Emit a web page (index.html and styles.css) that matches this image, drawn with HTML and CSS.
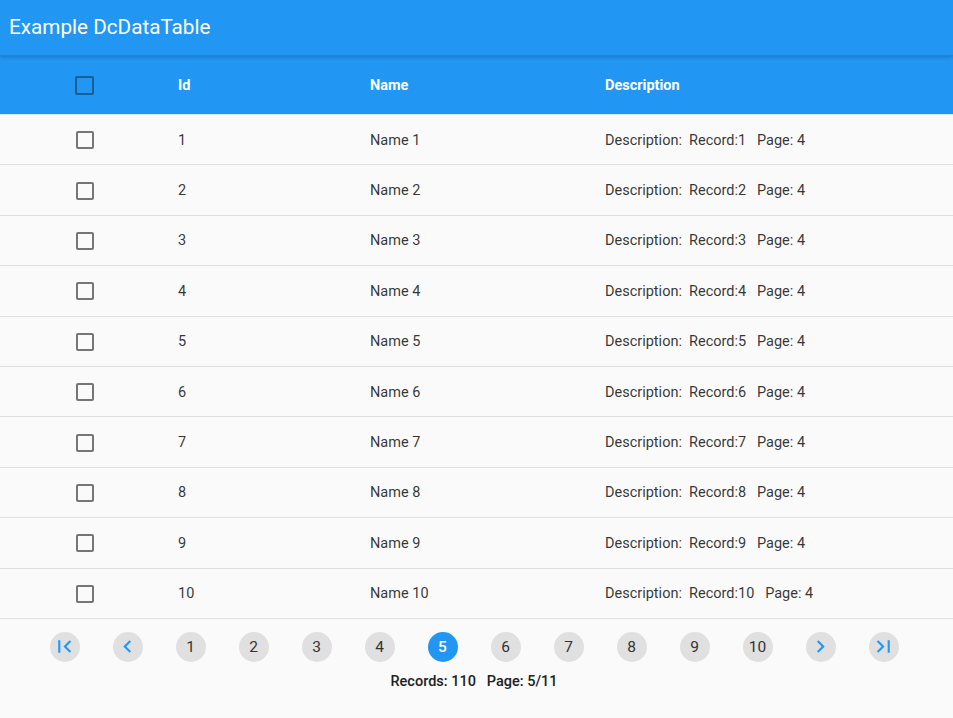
FILE: index.html
```html
<!DOCTYPE html>
<html>
<head>
<meta charset="utf-8">
<link rel="stylesheet" href="styles.css">
</head>
<body>
<header class="appbar"><span class="title">Example DcDataTable</span></header>
<div class="table">
  <div class="row head">
    <div class="cell chk"><span class="box box-head"></span></div>
    <div class="cell">Id</div>
    <div class="cell">Name</div>
    <div class="cell">Description</div>
  </div>
  <div class="row"><div class="cell chk"><span class="box"></span></div><div class="cell">1</div><div class="cell">Name 1</div><div class="cell desc">Description:  Record:1   Page: 4</div></div>
  <div class="row"><div class="cell chk"><span class="box"></span></div><div class="cell">2</div><div class="cell">Name 2</div><div class="cell desc">Description:  Record:2   Page: 4</div></div>
  <div class="row"><div class="cell chk"><span class="box"></span></div><div class="cell">3</div><div class="cell">Name 3</div><div class="cell desc">Description:  Record:3   Page: 4</div></div>
  <div class="row"><div class="cell chk"><span class="box"></span></div><div class="cell">4</div><div class="cell">Name 4</div><div class="cell desc">Description:  Record:4   Page: 4</div></div>
  <div class="row"><div class="cell chk"><span class="box"></span></div><div class="cell">5</div><div class="cell">Name 5</div><div class="cell desc">Description:  Record:5   Page: 4</div></div>
  <div class="row"><div class="cell chk"><span class="box"></span></div><div class="cell">6</div><div class="cell">Name 6</div><div class="cell desc">Description:  Record:6   Page: 4</div></div>
  <div class="row"><div class="cell chk"><span class="box"></span></div><div class="cell">7</div><div class="cell">Name 7</div><div class="cell desc">Description:  Record:7   Page: 4</div></div>
  <div class="row"><div class="cell chk"><span class="box"></span></div><div class="cell">8</div><div class="cell">Name 8</div><div class="cell desc">Description:  Record:8   Page: 4</div></div>
  <div class="row"><div class="cell chk"><span class="box"></span></div><div class="cell">9</div><div class="cell">Name 9</div><div class="cell desc">Description:  Record:9   Page: 4</div></div>
  <div class="row"><div class="cell chk"><span class="box"></span></div><div class="cell">10</div><div class="cell">Name 10</div><div class="cell desc">Description:  Record:10   Page: 4</div></div>
</div>
<nav class="pager">
  <span class="pg icon"><svg viewBox="0 0 24 24"><path d="M18.41 16.59L13.820 12l4.59-4.59L17 6l-6 6 6 6zM6 6h2v12H6z"/></svg></span>
  <span class="pg icon"><svg viewBox="0 0 24 24"><path d="M15.41 7.41L14 6l-6 6 6 6 1.41-1.41L10.83 12z"/></svg></span>
  <span class="pg">1</span>
  <span class="pg">2</span>
  <span class="pg">3</span>
  <span class="pg">4</span>
  <span class="pg active">5</span>
  <span class="pg">6</span>
  <span class="pg">7</span>
  <span class="pg">8</span>
  <span class="pg">9</span>
  <span class="pg">10</span>
  <span class="pg icon"><svg viewBox="0 0 24 24"><path d="M10 6L8.59 7.41 13.17 12l-4.58 4.59L10 18l6-6z"/></svg></span>
  <span class="pg icon"><svg viewBox="0 0 24 24"><path d="M5.59 7.41L10.18 12l-4.59 4.59L7 18l6-6-6-6zM16 6h2v12h-2z"/></svg></span>
</nav>
<div class="summary">Records: 110   Page: 5/11</div>
</body>
</html>
```

FILE: styles.css
```css
html, body {
  margin: 0;
  padding: 0;
  background: #fafafa;
  font-family: Roboto, "Liberation Sans", sans-serif;
  color: rgba(0, 0, 0, 0.8);
}

.appbar {
  height: 55px;
  background: #2196f3;
  display: flex;
  align-items: center;
  padding-left: 9px;
  position: relative;
  z-index: 2;
  box-shadow: 0 1px 0 #1e86d8, 0 2px 4px rgba(0, 0, 0, 0.22);
}

.title {
  color: #ffffff;
  font-size: 20.7px;
  font-weight: 400;
  padding-bottom: 1px;
}

.table {
  margin-top: 1px;
}

.row {
  display: grid;
  grid-template-columns: 178px 192px 235px 1fr;
  align-items: center;
  height: 48.4px;
  padding-top: 1px;
  border-bottom: 1px solid #e0e0e0;
  font-size: 14.5px;
}

.row.head {
  height: 57px;
  padding-top: 1px;
  background: #2196f3;
  color: #ffffff;
  font-weight: 700;
  border-bottom: 1px solid #d6e9f8;
}

.cell {
  white-space: pre;
}

.chk {
  display: flex;
  align-items: center;
  padding-left: 76px;
}

.box {
  width: 14px;
  height: 14px;
  border: 2px solid #757575;
  border-radius: 2px;
}

.box-head {
  border-color: #175f98;
  width: 15px;
  height: 15px;
  margin-left: -1px;
}

.pager {
  display: flex;
  justify-content: center;
  gap: 33px;
  margin-top: 13px;
  padding-right: 5px;
}

.pg {
  width: 30px;
  height: 30px;
  border-radius: 50%;
  background: #e0e0e0;
  display: flex;
  align-items: center;
  justify-content: center;
  font-size: 15.5px;
  color: #333333;
}

.pg.active {
  background: #2196f3;
  color: #ffffff;
  font-weight: 500;
}

.pg svg {
  width: 25px;
  height: 25px;
  fill: #2196f3;
}

.summary {
  margin-top: 10px;
  padding-right: 5px;
  text-align: center;
  font-size: 14.5px;
  font-weight: 500;
  white-space: pre;
  line-height: 20px;
  color: #212121;
}
```
